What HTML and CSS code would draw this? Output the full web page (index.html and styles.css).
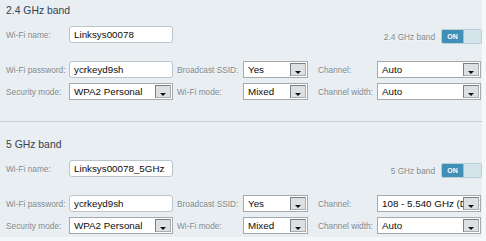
FILE: index.html
```html
<!DOCTYPE html>
<html lang="en">
<head>
    <meta charset="UTF-8">
    <title>Wireless settings</title>
    <link rel="stylesheet" href="styles.css">
</head>
<body>
    <div class="panel">
        <section class="band band-first">
            <h2 class="band-title">2.4 GHz band</h2>
            <div class="name-row">
                <span class="label">Wi-Fi name:</span>
                <span class="textbox">Linksys00078</span>
                <div class="switch-wrap">
                    <span class="label">2.4 GHz band</span>
                    <span class="switch"><span class="switch-on">ON</span><span class="switch-off"></span></span>
                </div>
            </div>
            <div class="fields">
                <span class="label">Wi-Fi password:</span>
                <span class="textbox">ycrkeyd9sh</span>
                <span class="label label-mid">Broadcast SSID:</span>
                <span class="select">Yes<i class="arrow"></i></span>
                <span class="label label-right">Channel:</span>
                <span class="select">Auto<i class="arrow"></i></span>

                <span class="label">Security mode:</span>
                <span class="select">WPA2 Personal<i class="arrow"></i></span>
                <span class="label label-mid">Wi-Fi mode:</span>
                <span class="select">Mixed<i class="arrow"></i></span>
                <span class="label label-right">Channel width:</span>
                <span class="select">Auto<i class="arrow"></i></span>
            </div>
        </section>

        <section class="band">
            <h2 class="band-title">5 GHz band</h2>
            <div class="name-row">
                <span class="label">Wi-Fi name:</span>
                <span class="textbox">Linksys00078_5GHz</span>
                <div class="switch-wrap">
                    <span class="label">5 GHz band</span>
                    <span class="switch"><span class="switch-on">ON</span><span class="switch-off"></span></span>
                </div>
            </div>
            <div class="fields">
                <span class="label">Wi-Fi password:</span>
                <span class="textbox">ycrkeyd9sh</span>
                <span class="label label-mid">Broadcast SSID:</span>
                <span class="select">Yes<i class="arrow"></i></span>
                <span class="label label-right">Channel:</span>
                <span class="select">108 - 5.540 GHz (DFS)<i class="arrow"></i></span>

                <span class="label">Security mode:</span>
                <span class="select">WPA2 Personal<i class="arrow"></i></span>
                <span class="label label-mid">Wi-Fi mode:</span>
                <span class="select">Mixed<i class="arrow"></i></span>
                <span class="label label-right">Channel width:</span>
                <span class="select">Auto<i class="arrow"></i></span>
            </div>
        </section>
    </div>
</body>
</html>
```

FILE: styles.css
```css
body {
    margin: 0;
    background-color: #f5f8f9;
    font-family: "Liberation Sans", Arial, sans-serif;
}

.panel {
    width: 482px;
    height: 237px;
    background-color: #e8eef1;
    overflow: hidden;
}

.band {
    padding: 16px 0 3px 6px;
}

.band-first {
    padding-top: 4px;
    padding-bottom: 21px;
    border-bottom: 1px solid #c6ced3;
}

.band-title {
    margin: 0 0 8px;
    height: 14px;
    line-height: 14px;
    font-size: 10.4px;
    font-weight: normal;
    color: #34444f;
}

.label {
    font-size: 8.3px;
    color: #80888e;
    text-shadow: 0 1px 0 #f6f9fa;
    white-space: nowrap;
}

.name-row {
    display: flex;
    align-items: center;
    height: 17px;
    margin-bottom: 18px;
}

.name-row > .label {
    width: 63px;
}

.textbox {
    box-sizing: border-box;
    width: 104px;
    height: 17px;
    padding: 0 4px;
    line-height: 15px;
    background: #fff;
    border: 1px solid #b9c4cb;
    border-radius: 3px;
    font-size: 9.8px;
    color: #0c0c0c;
}

.switch-wrap {
    margin-left: auto;
    margin-top: 4px;
    display: flex;
    align-items: center;
    gap: 6px;
}

.switch {
    display: flex;
    width: 41px;
    height: 15px;
    box-sizing: border-box;
    border: 1px solid #b9cdd6;
    border-radius: 2px;
    overflow: hidden;
}

.switch-on {
    width: 21px;
    background: #3f8fb6;
    color: #fff;
    font-size: 7px;
    font-weight: bold;
    line-height: 13px;
    text-align: center;
}

.switch-off {
    flex: 1;
    background: #d3e4eb;
    border-left: 1px solid #9fbfcd;
}

.fields {
    display: grid;
    grid-template-columns: 63px 104px 70px 65px 69px 104px;
    grid-auto-rows: 17px;
    row-gap: 5px;
    align-items: center;
}

.label-mid {
    padding-left: 4px;
}

.label-right {
    padding-left: 10px;
}

.select {
    position: relative;
    box-sizing: border-box;
    height: 17px;
    padding: 0 20px 0 4px;
    line-height: 15px;
    background: #fff;
    border: 1px solid #a3a9ad;
    font-size: 9.8px;
    color: #0c0c0c;
    white-space: nowrap;
    overflow: hidden;
}

.arrow {
    position: absolute;
    right: 1px;
    top: 1px;
    width: 16px;
    height: 13px;
    box-sizing: border-box;
    background: #dedfe0;
    border: 1px solid #7c7f82;
    border-right-color: #a9acae;
    border-bottom-color: #a9acae;
}

.arrow::after {
    content: "";
    position: absolute;
    left: 4px;
    bottom: 1px;
    border-left: 3px solid transparent;
    border-right: 3px solid transparent;
    border-top: 3px solid #111;
}
```
